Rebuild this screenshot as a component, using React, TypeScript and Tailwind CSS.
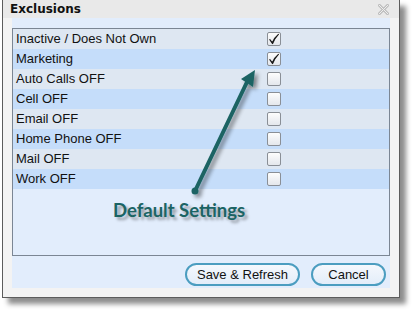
import React from "react";

const rows = [
  { label: "Inactive / Does Not Own", checked: true },
  { label: "Marketing", checked: true },
  { label: "Auto Calls OFF", checked: false },
  { label: "Cell OFF", checked: false },
  { label: "Email OFF", checked: false },
  { label: "Home Phone OFF", checked: false },
  { label: "Mail OFF", checked: false },
  { label: "Work OFF", checked: false },
];

const Check = ({ checked }: { checked: boolean }) => (
  <div className="w-[14px] h-[14px] border border-[#8a8f96] rounded-[2px] bg-gradient-to-b from-[#fdfdfd] to-[#e4e7ec] flex items-center justify-center">
    {checked && (
      <svg width="12" height="12" viewBox="0 0 12 12">
        <path d="M1.8 6.6 L4.3 9.6 Q6.5 4.5 10.4 1.4 Q6.6 5.2 4.6 10.6 Z" fill="#1b1b1b" stroke="#1b1b1b" strokeWidth="1.1" strokeLinejoin="round" />
      </svg>
    )}
  </div>
);

export default function App() {
  return (
    <div className="w-[418px] h-[315px] bg-white relative overflow-hidden" style={{ fontFamily: "'Liberation Sans', sans-serif" }}>
      {/* dialog */}
      <div className="ml-[2px] w-[398px] h-[298px] border-x border-b border-[#5c5c5c] bg-[#ececec] flex flex-col shadow-[6px_6px_5px_rgba(0,0,0,0.45)]">
        {/* title bar */}
        <div className="h-[18px] flex items-center justify-between pl-[7px] pr-[10px] bg-[#e9e9e9]">
          <span className="text-[13px] font-bold text-[#111]" style={{ fontFamily: "'DejaVu Sans', sans-serif", fontSize: "12px" }}>Exclusions</span>
          <svg width="11" height="11" viewBox="0 0 11 11">
            <path d="M1 1 L10 10 M10 1 L1 10" stroke="#bdbdbd" strokeWidth="3" strokeLinecap="square" />
            <path d="M1 1 L10 10 M10 1 L1 10" stroke="#efefef" strokeWidth="1" strokeLinecap="square" />
          </svg>
        </div>
        {/* body */}
        <div className="flex-1 bg-[#f3f3f3] px-[9px] pb-[9px] flex flex-col">
          <div className="flex-1 bg-[#e2edfc] flex flex-col pt-[10px]">
            <div className="h-[228px] border border-[#7b8694] flex flex-col">
              {rows.map((r, i) => (
                <div
                  key={r.label}
                  className={`h-[20px] flex items-center ${i % 2 === 0 ? "bg-[#dee7f2]" : "bg-[#c5ddfa]"}`}
                >
                  <span className="w-[254px] pl-[3px] text-[13px] text-[#111] whitespace-nowrap">{r.label}</span>
                  <Check checked={r.checked} />
                </div>
              ))}
            </div>
            <div className="flex justify-end gap-[11px] pr-[4px] pt-[7px]">
              <button className="w-[115px] h-[23px] rounded-full border-2 border-[#4b9dc0] bg-gradient-to-b from-[#f4f8fd] to-[#e3edf9] text-[13px] text-[#111]">
                Save &amp; Refresh
              </button>
              <button className="w-[75px] h-[23px] rounded-full border-2 border-[#4b9dc0] bg-gradient-to-b from-[#f4f8fd] to-[#e3edf9] text-[13px] text-[#111]">
                Cancel
              </button>
            </div>
          </div>
        </div>
      </div>

      {/* annotation arrow */}
      <svg className="absolute left-0 top-0" width="418" height="315" viewBox="0 0 418 315">
        <defs>
          <filter id="sh" x="-20%" y="-20%" width="140%" height="140%">
            <feGaussianBlur in="SourceAlpha" stdDeviation="2" />
            <feOffset dx="3" dy="3" result="b" />
            <feComponentTransfer><feFuncA type="linear" slope="0.45" /></feComponentTransfer>
            <feMerge>
              <feMergeNode />
              <feMergeNode in="SourceGraphic" />
            </feMerge>
          </filter>
        </defs>
        <g filter="url(#sh)">
          <line x1="195" y1="191" x2="247" y2="82" stroke="#1b6464" strokeWidth="4" strokeLinecap="round" />
          <circle cx="195" cy="191" r="3.5" fill="#1b6464" />
          <polygon points="255,70 241,79 253,87" fill="#1b6464" />
        </g>
      </svg>
      <div
        className="absolute left-[113px] top-[197px] text-[18.5px] font-bold text-[#1b6464]"
        style={{ fontFamily: "Lato, sans-serif", textShadow: "3px 3px 3px rgba(0,0,0,0.35)" }}
      >
        Default Settings
      </div>
    </div>
  );
}
